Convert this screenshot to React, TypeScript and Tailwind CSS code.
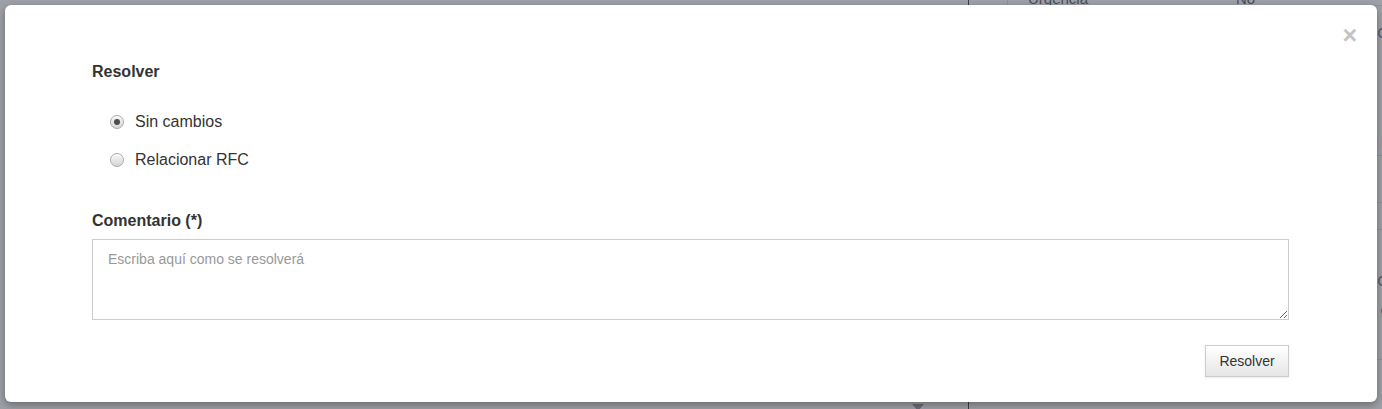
import React from 'react';

function Radio({ checked, label }: { checked?: boolean; label: string }) {
  return (
    <label className="flex items-center h-5 cursor-pointer">
      <span className="ml-[18px] w-[14px] h-[14px] rounded-full border border-[#a9a9a9] bg-gradient-to-b from-[#f6f6f6] to-[#d6d6d6] flex items-center justify-center shadow-[inset_0_1px_1px_rgba(255,255,255,0.8)]">
        {checked && <span className="w-[6px] h-[6px] rounded-full bg-[#4d4d4d]" />}
      </span>
      <span className="ml-[11px] text-[16px] text-[#333] leading-5">{label}</span>
    </label>
  );
}

export default function App() {
  return (
    <div className="relative w-[1382px] h-[409px] overflow-hidden bg-[#9ea1a7]" style={{ fontFamily: '"Liberation Sans", Arial, sans-serif' }}>
      {/* page behind the overlay */}
      <div className="flex h-full text-[#4a4f5a] text-[15px]">
        <div className="w-[969px] border-r border-[#3b3d42] flex items-end justify-end pr-[44px]">
          <span className="w-0 h-0 border-l-[6px] border-r-[6px] border-t-[7px] border-l-transparent border-r-transparent border-t-[#6b6e75] mb-[-2px]" />
        </div>
        <div className="flex-1 flex flex-col">
          <div className="h-[18px] -mt-[12px] flex border-b border-[#8f9298]">
            <span className="ml-[38px] border-l border-[#8f9298] pl-[20px]">Urgencia</span>
            <span className="ml-[148px]">No</span>
          </div>
          <div className="flex-1 flex flex-col items-end text-[#4f5a78]">
            <span className="mt-[16px] mr-[-6px]">C</span>
            <span className="mt-[86px] mr-[-3px]">I</span>
            <div className="w-full border-b border-[#8f9298] mt-[2px]" />
            <div className="w-full border-b border-[#8f9298] mt-[46px]" />
            <div className="w-full border-b border-[#8f9298] mt-[26px]" />
            <span className="mt-[40px] mr-[-6px]">C</span>
            <span className="mt-[6px] mr-[-6px]">c</span>
            <div className="w-full border-b border-[#8f9298] mt-[38px]" />
          </div>
        </div>
      </div>

      {/* modal */}
      <div className="absolute left-[5px] top-[5px] w-[1372px] h-[397px] bg-white rounded-[6px] shadow-[0_3px_9px_rgba(0,0,0,0.35)] pl-[87px] pr-[88px] pt-[58px]">
        <button className="absolute right-[20px] top-[18px] text-[#c4c4c4] text-[25px] font-bold leading-none">×</button>

        <h4 className="h-[18px] leading-[18px] text-[16px] font-bold text-[#333]">Resolver</h4>

        <div className="mt-[31px] flex flex-col gap-[18px]">
          <Radio checked label="Sin cambios" />
          <Radio label="Relacionar RFC" />
        </div>

        <div className="mt-[42px] h-[18px] leading-[18px] text-[16px] font-bold text-[#333]">Comentario (*)</div>

        <textarea
          className="mt-[9px] block w-full h-[81px] border border-[#cccccc] px-[15px] py-[9px] text-[14px] text-[#333] placeholder:text-[#999] outline-none"
          placeholder="Escriba aquí como se resolverá"
        />

        <div className="mt-[25px] flex justify-end">
          <button className="w-[84px] h-[32px] border border-[#cccccc] bg-gradient-to-b from-white to-[#e6e6e6] text-[14px] text-[#333] shadow-[0_1px_2px_rgba(0,0,0,0.08)]">
            Resolver
          </button>
        </div>
      </div>
    </div>
  );
}
